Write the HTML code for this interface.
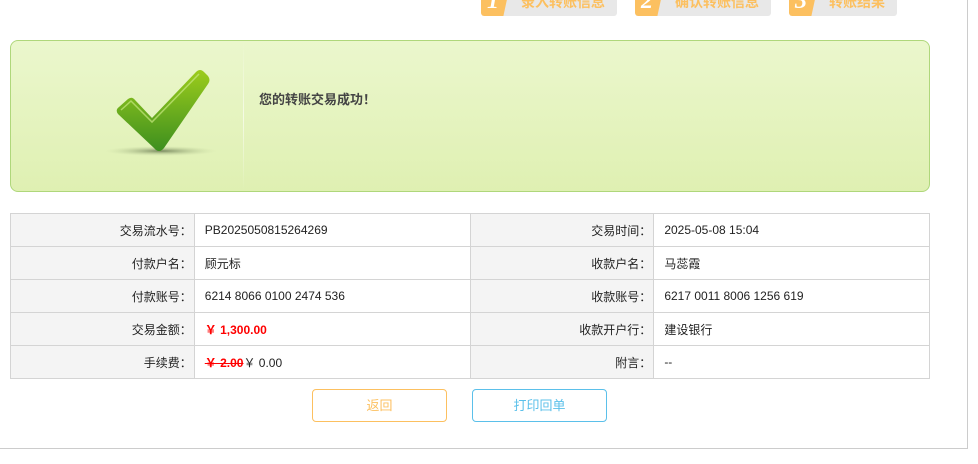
<!DOCTYPE html>
<html><head><meta charset="utf-8"><style>
*{margin:0;padding:0;box-sizing:border-box}
body{width:978px;height:464px;background:#fff;position:relative;overflow:hidden;font-family:"Liberation Sans","Noto Sans CJK SC",sans-serif;font-size:12px;color:#333}
.vr{position:absolute;left:967px;top:0;width:1px;height:449px;background:#ccc}
.hr{position:absolute;left:0;top:448px;width:968px;height:1px;background:#ccc}
.tab{position:absolute;top:-10px;height:26px;background:#e8e8e8;border-radius:0 0 3px 3px;color:#fcc060;font-weight:bold;font-size:14px;line-height:24px;overflow:hidden}
.tab .n{position:absolute;left:0;top:0;width:28px;height:26px;background:#fcc060;clip-path:polygon(0 0,100% 0,80% 100%,0 100%);border-radius:0 0 0 3px;color:#fff;font-family:"Liberation Serif",serif;font-style:italic;font-size:24px;line-height:22px;padding-left:6px}
.tab .t{position:absolute;left:40px;top:0}
.box{position:absolute;left:10px;top:40px;width:920px;height:152px;border:1px solid #afd77b;border-radius:8px;background:linear-gradient(180deg,#ebf7cd,#dff0b2)}
.msg{position:absolute;left:259px;top:89px;font-weight:bold;font-size:13px;color:#444}
table{position:absolute;left:10px;top:213px;width:920px;border-collapse:collapse}
td{border:1px solid #d4d4d4;height:33px;padding:0 10px;font-size:12px;color:#222}
td.l{background:#f4f4f4;text-align:right;width:184px;padding-right:2px}
td.v{width:276px}
.red{color:#f00;font-weight:bold}
.btn{position:absolute;top:389px;width:135px;height:33px;border:1px solid;border-radius:4px;text-align:center;line-height:31px;font-size:13px}
</style></head><body>
<div class="vr"></div><div class="hr"></div>
<div class="tab" style="left:481px;width:136px"><span class="n">1</span><span class="t">录入转账信息</span></div>
<div class="tab" style="left:635px;width:136px"><span class="n">2</span><span class="t">确认转账信息</span></div>
<div class="tab" style="left:789px;width:108px"><span class="n">3</span><span class="t">转账结果</span></div>
<div class="box">
<div style="position:absolute;left:232px;top:0;width:1px;height:150px;background:linear-gradient(180deg,rgba(255,255,255,0),rgba(255,255,255,.6),rgba(255,255,255,0))"></div>
<svg style="position:absolute;left:90px;top:25px" width="120" height="95" viewBox="0 0 120 95">
<defs><linearGradient id="g" x1="0" y1="0" x2="0" y2="1"><stop offset="0" stop-color="#9ccc1c"/><stop offset="1" stop-color="#3d8f1f"/></linearGradient>
<radialGradient id="s"><stop offset="0" stop-color="#7a8a60"/><stop offset="1" stop-color="#c6d8a0" stop-opacity="0"/></radialGradient></defs>
<ellipse cx="60" cy="85" rx="56" ry="5" fill="url(#s)"/>
<path d="M17 48 Q14 44 18 41 L27 33 Q31 30 34 34 L51 52 L95 6 Q99 2 103 6 L107 10 Q110 14 107 18 L63 82 Q58 88 53 82 Z" fill="url(#g)"/>
<path d="M20 44 L30 35 L51 56 L98 8" stroke="#c8e880" stroke-width="1.5" fill="none" opacity=".7"/>
</svg>
</div>
<div class="msg">您的转账交易成功！</div>
<table>
<tr><td class="l">交易流水号：</td><td class="v">PB2025050815264269</td><td class="l">交易时间：</td><td class="v">2025-05-08 15:04</td></tr>
<tr><td class="l">付款户名：</td><td class="v">顾元标</td><td class="l">收款户名：</td><td class="v">马蕊霞</td></tr>
<tr><td class="l">付款账号：</td><td class="v">6214 8066 0100 2474 536</td><td class="l">收款账号：</td><td class="v">6217 0011 8006 1256 619</td></tr>
<tr><td class="l">交易金额：</td><td class="v"><span class="red">￥ 1,300.00</span></td><td class="l">收款开户行：</td><td class="v">建设银行</td></tr>
<tr><td class="l">手续费：</td><td class="v"><span class="red" style="text-decoration:line-through">￥ 2.00</span>￥ 0.00</td><td class="l">附言：</td><td class="v">--</td></tr>
</table>
<div class="btn" style="left:312px;border-color:#fcc060;color:#fcc060">返回</div>
<div class="btn" style="left:472px;border-color:#5bc0ea;color:#5bc0ea">打印回单</div>
</body></html>
